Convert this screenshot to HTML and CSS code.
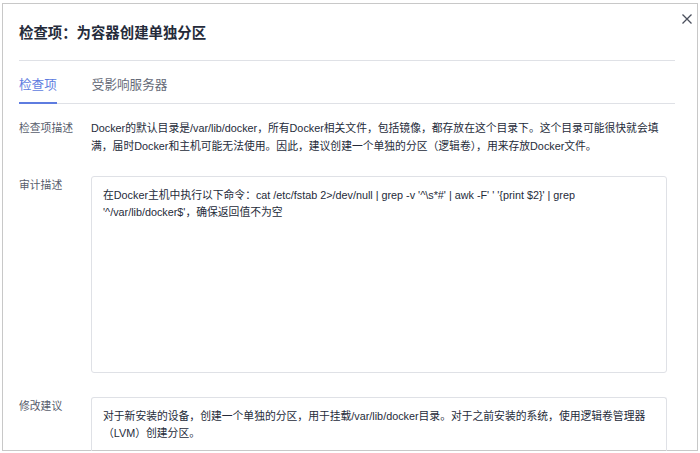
FILE: index.html
```html
<!DOCTYPE html>
<html lang="zh-CN">
<head>
<meta charset="utf-8">
<title>检查项：为容器创建单独分区</title>
<link rel="stylesheet" href="styles.css">
</head>
<body>
<div class="dialog">
  <button class="close" aria-label="关闭">
    <svg width="10" height="10" viewBox="0 0 10 10"><path d="M0.5 0.5L9.5 9.5M9.5 0.5L0.5 9.5" stroke="#4a4f5c" stroke-width="1.3" fill="none"/></svg>
  </button>
  <div class="header">检查项：为容器创建单独分区</div>
  <div class="tabs">
    <div class="tab active">检查项</div>
    <div class="tab">受影响服务器</div>
  </div>
  <div class="row first">
    <div class="label">检查项描述</div>
    <div class="value">Docker的默认目录是/var/lib/docker，所有Docker相关文件，包括镜像，都存放在这个目录下。这个目录可能很快就会填满，届时Docker和主机可能无法使用。因此，建议创建一个单独的分区（逻辑卷），用来存放Docker文件。</div>
  </div>
  <div class="row">
    <div class="label">审计描述</div>
    <div class="box tall">在Docker主机中执行以下命令：cat /etc/fstab 2&gt;/dev/null | grep -v '^\s*#' | awk -F' ' '{print $2}' | grep '^/var/lib/docker$'，确保返回值不为空</div>
  </div>
  <div class="row">
    <div class="label">修改建议</div>
    <div class="box short">对于新安装的设备，创建一个单独的分区，用于挂载/var/lib/docker目录。对于之前安装的系统，使用逻辑卷管理器（LVM）创建分区。</div>
  </div>
</div>
</body>
</html>
```
FILE: styles.css
```css
html, body {
  margin: 0;
  padding: 0;
  background: #ffffff;
  overflow: hidden;
}
body {
  font-family: "Liberation Sans", "Noto Sans CJK SC", sans-serif;
  color: #252b3a;
}
.dialog {
  position: relative;
  box-sizing: border-box;
  margin: 3px 0 0 2px;
  width: 696px;
  height: 448px;
  border: 1px solid #c8c8c8;
  padding: 0 22px 0 16px;
}
.close {
  position: absolute;
  top: 9px;
  right: 4px;
  width: 12px;
  height: 12px;
  padding: 0;
  border: 0;
  background: transparent;
  display: flex;
  align-items: center;
  justify-content: center;
}
.header {
  padding: 19px 0 17px;
  font-size: 14.4px;
  line-height: 20px;
  font-weight: bold;
  color: #252b3a;
  border-bottom: 1px solid #dfe1e6;
}
.tabs {
  display: flex;
  gap: 35px;
  border-bottom: 1px solid #dfe1e6;
}
.tab {
  font-size: 12.6px;
  line-height: 18px;
  padding: 15px 0 8px;
  border-bottom: 2px solid transparent;
  margin-bottom: -1px;
  color: #666b78;
}
.tab.active {
  color: #5e7ce0;
  border-bottom-color: #5e7ce0;
}
.row {
  display: flex;
  margin-top: 21px;
  font-size: 10.8px;
}
.row.first {
  margin-top: 15px;
}
.label {
  width: 72px;
  flex: none;
  line-height: 18px;
  color: #575d6c;
}
.value {
  width: 575px;
  line-height: 18px;
  color: #252b3a;
}
.box {
  box-sizing: border-box;
  width: 576px;
  border: 1px solid #dfe1e6;
  border-radius: 3px;
  padding: 10px 11px;
  line-height: 17px;
  color: #252b3a;
  background: transparent;
}
.box.tall {
  height: 197px;
}
.box.short {
  height: 56px;
  border-bottom-color: transparent;
  border-radius: 3px 3px 0 0;
}
.row + .row + .row {
  margin-top: 24px;
}
```
